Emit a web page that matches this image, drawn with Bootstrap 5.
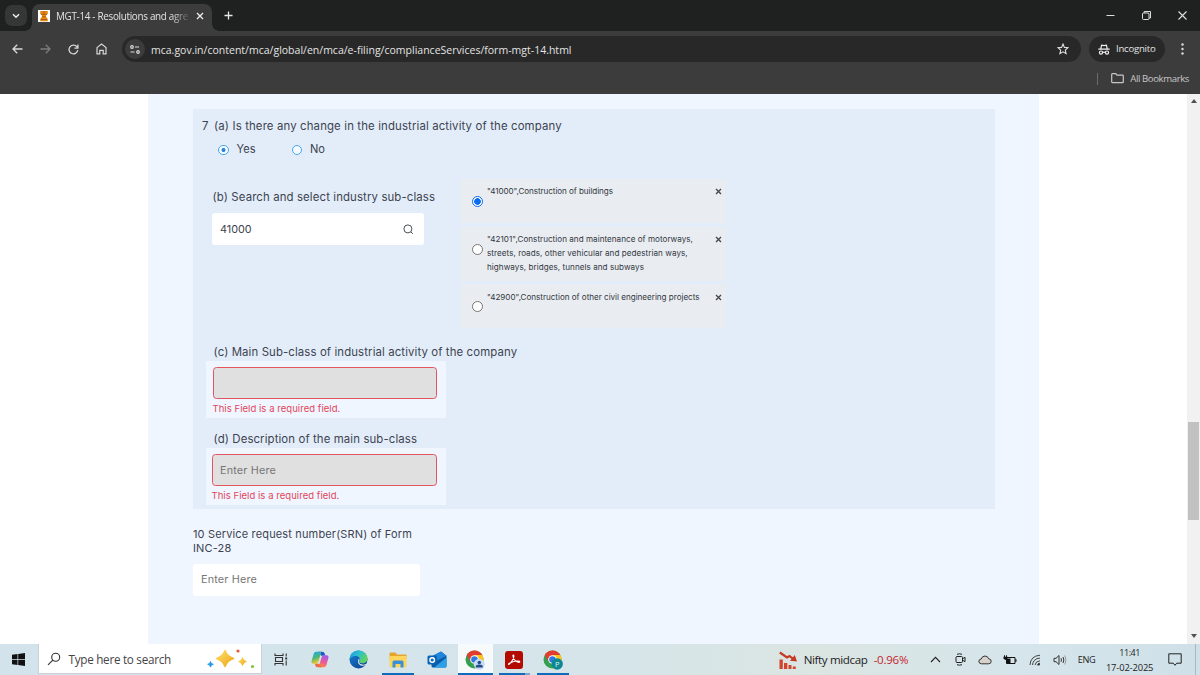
<!DOCTYPE html>
<html lang="en">
<head>
<meta charset="utf-8">
<title>MGT-14 - Resolutions and agreements</title>
<link href="https://cdn.jsdelivr.net/npm/bootstrap@5.3.0/dist/css/bootstrap.min.css" rel="stylesheet">
<style>
html,body{height:100%;overflow:hidden}
body{font-family:"Open Sans","Noto Sans",sans-serif;width:1200px;height:675px;font-size:10px;line-height:16px;color:#3d434f;background:#fff}
svg{display:block;flex:none}
.t{white-space:nowrap;display:inline-block}
/* browser chrome */
.browser{background:#3c3c3c;height:94px;color:#e3e3e3}
.tabstrip{height:31px;background:#1f2120}
.tabmenu{width:22px;height:21px;border-radius:7px;background:#353636;margin:5px 0 0 5px}
.tabitem{width:180px;height:27px;margin:4px 0 0 5px;border-radius:8px 8px 0 0;background:#3c3c3c;padding:0 0 3px 6px;position:relative}
.tabitem::before,.tabitem::after{content:"";position:absolute;bottom:0;width:7px;height:7px}
.tabitem::before{left:-7px;background:radial-gradient(circle at 0 0,transparent 6.5px,#3c3c3c 7px)}
.tabitem::after{right:-7px;background:radial-gradient(circle at 100% 0,transparent 6.5px,#3c3c3c 7px)}
.tabtitle{width:134px;margin:0 6px;-webkit-mask-image:linear-gradient(90deg,#000 86%,rgba(0,0,0,.2) 98%);mask-image:linear-gradient(90deg,#000 86%,rgba(0,0,0,.2) 98%)}
.t1{font-size:9.9px;letter-spacing:-.31px}
.plus{margin:11px 0 0 12px}
.win{height:31px;padding-right:13.5px;gap:27px}
.toolbar{height:36px}
.navs{margin-left:12px;gap:17px}
.omni{width:959px;height:26px;border-radius:13px;background:#282828;margin-left:15px}
.siteinfo{width:20px;height:20px;border-radius:50%;background:#3c3c3c;margin-left:3px}
.t2{font-size:10.5px;margin-left:6px;letter-spacing:.01px;padding-top:1px}
.star{margin-right:12px}
.incog{width:76px;height:26px;border-radius:13px;background:#282828;margin-left:8px;padding-left:9px}
.t3{font-size:9.6px;letter-spacing:-.24px;margin-left:6px}
.dots{margin-left:16px}
.bookmarks{height:23px;color:#c7c7c7;padding-right:11px}
.fold{margin:0 6px 0 13px}
.t4{font-size:9.6px;letter-spacing:-.4px}
/* form */
.page{height:550px;background:#fff}
.sheet{width:891px;margin-left:148px;background:#eff6ff;padding:15px 44px 0 45px;font-family:Inter,sans-serif}
.panel7{height:400px;background:#e3edfa;padding-top:9px}
.lbl{font-size:11.4px;height:16px;line-height:17px;letter-spacing:.12px}
.q7{width:12px;margin-left:9px}
.a1{letter-spacing:.135px}
.radios{height:16px;margin:8px 0 0 25px}
.rad{width:10.5px;height:10.5px;border-radius:50%;border:1px solid #4aa7ea;background:#f4faff;flex:none}
.rad.on{background:radial-gradient(circle,#2b86d9 0 1.7px,#f4faff 2.3px)}
.yes,.no{margin-left:8px;letter-spacing:0;font-size:11.1px;line-height:15px}
.yes{margin-right:36px}
.rowb{margin:21px 0 0 19px;height:165px}
.colb{width:249px;padding-top:10px}
.a2{margin-left:.5px}
.field{height:32px;border-radius:3px;background:#fff;font-size:10.8px;letter-spacing:.18px;padding:1px 8px 0}
.fb{width:212px;margin-top:8px;padding-right:10.5px;letter-spacing:0}
.field.bad{background:#e0e0e0;border:1px solid #e25560;padding:1px 7.5px 0;border-radius:3.5px}
.ph{color:#757575}
.choices{gap:3.7px;margin-left:-.5px}
.choice{width:265px;height:44px;background:#e9edf2;padding:6px 3.5px 0 11px;font-size:8.1px;line-height:13.8px;color:#33383f}
.c2{height:54px}
.c2,.c3{padding-top:6.4px}
.nrad{width:11px;height:11px;border:1px solid #767676;border-radius:50%;background:#fff;flex:none;margin:10.5px 4.5px 0 0}
.nrad.on{border-color:#0a6cf0;background:radial-gradient(circle,#0a6cf0 0 3px,#fff 3.6px)}
.x{margin-top:3px}
.b1{letter-spacing:-.07px}.b2{letter-spacing:.03px}.b3,.b4{letter-spacing:.05px}.b5{letter-spacing:-.02px}
.lc,.ld{margin-left:20.5px;letter-spacing:.11px}
.ld{margin-top:13px}
.errbox{width:240.5px;height:57px;margin:1px 0 0 12.5px;background:#eff6ff;padding:6px 9.5px 0 7px}
.ed{padding-left:6px}
.err{font-size:9.5px;letter-spacing:.05px;color:#e3455a;height:16px;line-height:16px;margin-top:1.5px}
.srn{font-size:11px;line-height:14.5px;margin-top:17.7px;letter-spacing:.15px}
.fs{width:227px;margin-top:8.3px}
.scroll{width:13px;background:#f1f1f1;padding:5px 0 6px}
.thumb{width:11px;height:98px;background:#c1c1c1;margin-top:319px}
/* taskbar */
.taskbar{height:31px;background:linear-gradient(90deg,#d3e3ec,#d5e5ea 50%,#dbe5e2 68%,#d5e5eb 85%,#cfe0e8);color:#1d1d1d}
.start{width:37.5px;padding-left:12px}
.tsearch{width:224px;height:30px;background:#fff;border:1px solid #c9d1d6;border-top:0;padding-left:8px;margin-bottom:1px}
.t5{font-size:11.7px;letter-spacing:-.27px;margin-left:8px;color:#444}
.spark{margin-left:35px}
.slot{width:38.9px;height:31px;display:flex;align-items:center;justify-content:center}
.run{background:linear-gradient(#0f6cbd,#0f6cbd) center bottom/32px 2px no-repeat}
.act{background:linear-gradient(#0f6cbd,#0f6cbd) center bottom/35px 2px no-repeat,linear-gradient(#f6fafb,#f6fafb) center/35px 100% no-repeat}
.multi{background:linear-gradient(#0f6cbd,#0f6cbd) 4px bottom/26px 2px no-repeat,linear-gradient(#7ea6c4,#7ea6c4) 30px bottom/5px 2px no-repeat}
.stock{margin-left:206px}
.t6{font-size:11.6px;letter-spacing:-.37px;width:64px;margin-left:7px}
.t7{font-size:11.5px;letter-spacing:-.23px;width:34.5px;margin-left:6px;color:#c4262e}
.tray{width:25px;display:flex;justify-content:center}
.caret{margin-left:14.5px}
.t8{font-size:9.2px;letter-spacing:-.27px;width:18px;margin-left:5px}
.clock{width:48px;margin-left:10px;line-height:14px;text-align:center}
.t9{font-size:9px;letter-spacing:-.4px}
.t10{font-size:9.4px;letter-spacing:-.15px}
.note{margin-left:14px}
</style>
</head>
<body class="d-flex flex-column">
<header class="browser">
 <div class="tabstrip d-flex align-items-start">
  <div class="tabmenu d-flex align-items-center justify-content-center"><svg width="8" height="6" viewBox="0 0 8 6" fill="none" stroke="#eee" stroke-width="1.5"><path d="M1 1.2 4 4.2 7 1.2"/></svg></div>
  <div class="tabitem d-flex align-items-center">
   <svg width="12" height="12" viewBox="0 0 12 12"><path fill="#fff" d="M0 0h12v12H0z"/><path fill="#e48a1b" d="M2.2 1h7.6v3L8 5.5v1L9.8 9v2.3H2.2V9L4 6.5v-1L2.2 4z"/><path stroke="#a65207" stroke-width=".8" d="M3 4.3h6M4 6.8h4M3 9.5h6M6 1v3"/></svg>
   <div class="tabtitle"><span class="t t1">MGT-14 - Resolutions and agre</span></div>
   <svg width="8" height="8" viewBox="0 0 8 8" stroke="#eee" stroke-width="1.3"><path d="M1 1 7 7M7 1 1 7"/></svg>
  </div>
  <svg width="9" height="9" viewBox="0 0 9 9" class="plus" stroke="#e8e8e8" stroke-width="1.3"><path d="M4.5 .5v8M.5 4.5h8"/></svg>
  <div class="win d-flex ms-auto align-items-center">
   <svg width="9" height="10" viewBox="0 0 9 10" stroke="#ddd"><path d="M.5 4.5h8"/></svg>
   <svg width="9" height="9" viewBox="0 0 9 9" fill="none" stroke="#ddd"><rect x=".5" y="2" width="6.5" height="6.5" rx="1"/><path d="M2.2 2V.5h6.3V7H7"/></svg>
   <svg width="9" height="9" viewBox="0 0 9 9" stroke="#ddd" stroke-width="1.1"><path d="M.5.5l8 8M8.5.5l-8 8"/></svg>
  </div>
 </div>
 <div class="toolbar d-flex align-items-center">
  <div class="navs d-flex align-items-center">
   <svg width="11" height="10" viewBox="0 0 11 10" fill="none" stroke="#d8d8d8" stroke-width="1.3"><path d="M10.5 5H1.2M5.2.8 1 5l4.2 4.2"/></svg>
   <svg width="11" height="10" viewBox="0 0 11 10" fill="none" stroke="#7c7c7c" stroke-width="1.3"><path d="M.5 5h9.3M5.8.8 10 5 5.8 9.2"/></svg>
   <svg width="11" height="11" viewBox="0 0 11 11" fill="none" stroke="#d8d8d8" stroke-width="1.3"><path d="M9.8 6.2A4.4 4.4 0 1 1 8.9 2.7L9.8 3.8M9.9.6v3.5H6.4"/></svg>
   <svg width="11" height="12" viewBox="0 0 11 12" fill="none" stroke="#d8d8d8" stroke-width="1.2"><path d="M1 4.6 5.5 1 10 4.6v6.3H7.2V7.4H3.8v3.5H1z"/></svg>
  </div>
  <div class="omni d-flex align-items-center">
   <div class="siteinfo d-flex align-items-center justify-content-center"><svg width="10" height="9" viewBox="0 0 10 9" fill="none" stroke="#ddd" stroke-width="1.2"><circle cx="2" cy="2" r="1.3"/><path d="M5 2h4M.5 7h4"/><circle cx="8" cy="7" r="1.3"/></svg></div>
   <span class="t t2">mca.gov.in/content/mca/global/en/mca/e-filing/complianceServices/form-mgt-14.html</span>
   <svg class="ms-auto star" width="12" height="12" viewBox="0 0 12 12" fill="none" stroke="#ddd" stroke-width="1.1"><path d="M6 1 7.4 4.4 11 4.7 8.3 7.1 9.1 10.7 6 8.8 2.9 10.7 3.7 7.1 1 4.7 4.6 4.4z"/></svg>
  </div>
  <div class="incog d-flex align-items-center">
   <svg width="12" height="11" viewBox="0 0 12 11" fill="none" stroke="#eee" stroke-width="1.2"><path d="M.3 5.2h11.4M2.7 5 3.6 1.2 6 1.6l2.4-.4L9.3 5M4.6 8.5q1.4-.8 2.8 0"/><circle cx="3" cy="8.6" r="1.6"/><circle cx="9" cy="8.6" r="1.6"/></svg>
   <span class="t t3">Incognito</span>
  </div>
  <svg class="dots" width="3" height="12" viewBox="0 0 3 12" fill="#ddd"><circle cx="1.5" cy="1.5" r="1.2"/><circle cx="1.5" cy="6" r="1.2"/><circle cx="1.5" cy="10.5" r="1.2"/></svg>
 </div>
 <div class="bookmarks d-flex align-items-center justify-content-end">
  <svg width="1" height="12"><path fill="#6b6b6b" d="M0 0h1v12H0z"/></svg>
  <svg class="fold" width="13" height="11" viewBox="0 0 13 11" fill="none" stroke="#c7c7c7" stroke-width="1.2"><path d="M.7 1.4q0-.7.7-.7h3.3l1.3 1.5h5.6q.7 0 .7.7v6q0 .7-.7.7H1.4q-.7 0-.7-.7z"/></svg>
  <span class="t t4">All Bookmarks</span>
 </div>
</header>

<main class="page d-flex">
 <section class="sheet">
  <div class="panel7">
   <div class="lbl d-flex"><span class="t q7">7</span><span class="t a1">(a) Is there any change in the industrial activity of the company</span></div>
   <div class="radios d-flex align-items-center"><i class="rad on"></i><span class="lbl t yes">Yes</span><i class="rad"></i><span class="lbl t no">No</span></div>
   <div class="rowb d-flex">
    <div class="colb">
     <div class="lbl"><span class="t a2">(b) Search and select industry sub-class</span></div>
     <div class="field fb d-flex align-items-center justify-content-between"><span class="t">41000</span><svg width="11" height="11" viewBox="0 0 11 11" fill="none" stroke="#4a5058"><circle cx="4.9" cy="4.9" r="4"/><path d="m7.8 7.8 2 2"/></svg></div>
    </div>
    <div class="d-flex flex-column choices">
     <div class="choice c1 d-flex"><i class="nrad on"></i><div class="flex-fill"><span class="t b1">"41000",Construction of buildings</span></div><svg class="x" width="7" height="7" viewBox="0 0 7 7" stroke="#444" stroke-width="1.3"><path d="m1 1 5 5M6 1 1 6"/></svg></div>
     <div class="choice c2 d-flex"><i class="nrad"></i><div class="flex-fill"><span class="t b2">"42101",Construction and maintenance of motorways,</span><br><span class="t b3">streets, roads, other vehicular and pedestrian ways,</span><br><span class="t b4">highways, bridges, tunnels and subways</span></div><svg class="x" width="7" height="7" viewBox="0 0 7 7" stroke="#444" stroke-width="1.3"><path d="m1 1 5 5M6 1 1 6"/></svg></div>
     <div class="choice c3 d-flex"><i class="nrad"></i><div class="flex-fill"><span class="t b5">"42900",Construction of other civil engineering projects</span></div><svg class="x" width="7" height="7" viewBox="0 0 7 7" stroke="#444" stroke-width="1.3"><path d="m1 1 5 5M6 1 1 6"/></svg></div>
    </div>
   </div>
   <div class="lbl lc"><span class="t">(c) Main Sub-class of industrial activity of the company</span></div>
   <div class="errbox ec"><div class="field bad"></div><div class="err"><span class="t">This Field is a required field.</span></div></div>
   <div class="lbl ld"><span class="t">(d) Description of the main sub-class</span></div>
   <div class="errbox ed"><div class="field bad d-flex align-items-center ph"><span class="t">Enter Here</span></div><div class="err"><span class="t">This Field is a required field.</span></div></div>
  </div>
  <div class="srn"><span class="t">10 Service request number(SRN) of Form</span><br><span class="t">INC-28</span></div>
  <div class="field fs d-flex align-items-center ph"><span class="t">Enter Here</span></div>
 </section>
 <div class="scroll ms-auto d-flex flex-column align-items-center">
  <svg width="6" height="4" viewBox="0 0 6 4" fill="#505050"><path d="M0 4 3 0l3 4z"/></svg>
  <div class="thumb"></div>
  <svg class="mt-auto" width="6" height="4" viewBox="0 0 6 4" fill="#505050"><path d="m0 0 3 4 3-4z"/></svg>
 </div>
</main>

<footer class="taskbar d-flex align-items-center">
 <div class="start"><svg width="13" height="13" viewBox="0 0 13 13" fill="#111"><path d="M0 1.8 5.5 1v5.2H0zM6.2.9 13 0v6.2H6.2zM0 6.9h5.5v5.2L0 11.3zM6.2 6.9H13V13l-6.8-.9z"/></svg></div>
 <div class="tsearch d-flex align-items-center">
  <svg width="14" height="14" viewBox="0 0 14 14" fill="none" stroke="#333" stroke-width="1.1"><circle cx="8.7" cy="5.2" r="4"/><path d="M5.8 8.1 1 12.9"/></svg>
  <span class="t t5">Type here to search</span>
  <svg class="spark" width="50" height="24" viewBox="0 0 50 24">
   <defs><linearGradient id="gold" x1="0" y1="0" x2="1" y2="1"><stop offset="0" stop-color="#ffe067"/><stop offset="1" stop-color="#eda51c"/></linearGradient></defs>
   <path fill="url(#gold)" stroke="url(#gold)" stroke-width="1.5" stroke-linejoin="round" d="M19 3.500q2.200 6 8.500 8-6.300 2-8.500 8-2.200-6-8.500-8 6.300-2 8.500-8z"/>
   <path fill="url(#gold)" d="M36.500 10q1.200 3.300 4.500 4.500-3.300 1.200-4.500 4.500-1.200-3.300-4.500-4.500 3.300-1.200 4.500-4.500z"/>
   <path fill="#229bea" stroke="#229bea" stroke-linejoin="round" d="m4.500 14.500.8 2 2 .8-2 .8-.8 2-.8-2-2-.8 2-.8z"/>
   <circle cx="32" cy="4" r="1.6" fill="#e9573a"/><circle cx="46.5" cy="19.5" r="1.6" fill="#82c23d"/>
  </svg>
 </div>
 <div class="slot"><svg width="14" height="13" viewBox="0 0 14 13" fill="none" stroke="#333" stroke-width="1.1"><path d="M1 .5v2h8v-2M1 12.500v-2h8v2M1.500 4.500h7v4h-7zM12.200.5v3M12.200 7.500v5"/><path stroke-width="2" d="M11.200 5.500h2"/></svg></div>
 <div class="slot"><svg width="18" height="17" viewBox="0 0 18 17">
  <defs><linearGradient id="cpa" x1="0" y1="0" x2=".3" y2="1"><stop offset="0" stop-color="#22a7ee"/><stop offset=".55" stop-color="#49b67c"/><stop offset="1" stop-color="#f0c92c"/></linearGradient><linearGradient id="cpb" x1=".5" y1="0" x2=".3" y2="1"><stop offset="0" stop-color="#a25de6"/><stop offset=".55" stop-color="#ea5a9b"/><stop offset="1" stop-color="#f98b3d"/></linearGradient></defs>
  <path fill="#2059c9" d="M7 .8h4.500q1.500 0 2 1.500l.8 2.500h-4z"/>
  <path fill="url(#cpa)" d="M5 .8h4.500q1 0 .6 1.300L7.300 11q-.5 1.700-2 1.700H2.500Q0 12.700.6 10L2.700 2.700Q3.300.8 5 .8z"/>
  <path fill="url(#cpb)" d="M13 16.200H8.500q-1 0-.6-1.300L10.700 6q.5-1.700 2-1.700h2.800q2.500 0 1.900 2.700l-2.100 7.300q-.6 1.900-2.300 1.900z"/>
  <path fill="#ef6a45" d="M11 16.200H6.500q-1.500 0-2-1.500l-.6-2h4z"/></svg></div>
 <div class="slot"><svg width="19" height="19" viewBox="0 0 19 19">
  <defs><linearGradient id="eda" x1="0" y1="0" x2="1" y2=".5"><stop offset="0" stop-color="#1c9be0"/><stop offset=".5" stop-color="#2bbfd0"/><stop offset="1" stop-color="#62d35b"/></linearGradient><linearGradient id="edb" x1="0" y1="0" x2=".6" y2="1"><stop offset="0" stop-color="#1683d8"/><stop offset="1" stop-color="#114a98"/></linearGradient></defs>
  <circle cx="9.5" cy="9.5" r="9" fill="url(#edb)"/>
  <path fill="url(#eda)" d="M.6 9.200C1 3.800 5 .5 9.500.5c5.500 0 9 4 9 8 0 3-2.300 4.800-5 4.800-2.500 0-3.600-1-3-2 .9-1.500.5-4.800-3-5.300C4.200 5.600 1.500 7 .6 9.200z"/>
  <path fill="#d7e6eb" d="M10.500 10.200c-.8 1.500-.3 3.800 2.800 4.400 1.800.3 3.500-.3 4.600-1.100l-.8 1.400c-1.500.8-3.900 1.200-5.900.3C8.800 14 8.600 11 9.800 8.800q.8.500.7 1.400z"/></svg></div>
 <div class="slot run"><svg width="18" height="16" viewBox="0 0 18 16"><path fill="#e5a52c" d="M.5 1.500Q.5.500 1.500.5h5l1.500 2H17q.5 0 .5.700V7H.5z"/><path fill="#ffd65c" d="M.5 4h17v10.500q0 .8-.8.800H1.300q-.8 0-.8-.8z"/><path fill="#3b8fd6" d="M3.500 15.500V10q0-1.500 1.500-1.500h8q1.500 0 1.500 1.500v5.500h-3V12h-5v3.500z"/></svg></div>
 <div class="slot"><svg width="20" height="17" viewBox="0 0 20 17"><path fill="#0c59a4" d="M4.500 5.500 14 .5l5.500 4.300V15q0 1.500-1.500 1.500H6q-1.500 0-1.500-1.500z"/><path fill="#1f86dc" d="m7 4.200 7-3.700 5.500 4.300L10 9.500z"/><path fill="#2b9fe8" d="M19.500 6.500V15q0 1.500-1.500 1.500H7z"/><rect x=".5" y="4.500" width="9.500" height="9" rx="1.500" fill="#0b63b8"/><circle cx="5.200" cy="9" r="2.300" fill="none" stroke="#fff" stroke-width="1.400"/></svg></div>
 <div class="slot act"><svg width="20" height="20" viewBox="0 0 20 20"><circle cx="9.5" cy="9.5" r="9" fill="#34a04e"/><path fill="#e33b2e" d="M1.700 5A9 9 0 0 1 17.300 5L14 8 9.500 9.500 5.600 11.700z"/><path fill="#fbc41a" d="M17.300 5a9 9 0 0 1-7.800 13.500L13.400 11.700 9.500 5z"/><circle cx="9.5" cy="9.5" r="4.300" fill="#fff"/><circle cx="9.5" cy="9.5" r="3.300" fill="#2e78e4"/><circle cx="14.300" cy="14.300" r="5.500" fill="#c9dcf3"/><circle cx="14.300" cy="12.500" r="1.800" fill="#214f8e"/><path fill="#214f8e" d="M10.800 17.500v-1q0-2 3.500-2t3.500 2v1z"/></svg></div>
 <div class="slot multi"><svg width="18" height="18" viewBox="0 0 18 18"><rect width="18" height="18" rx="3" fill="#b30b00"/><path fill="none" stroke="#fff" stroke-width="1.1" d="M3.700 13.500c1.500-1 5.400-5.600 5.200-8.600-.1-1.300-1.100-1.200-1-.1.300 3.500 3.400 6.700 6 6.600 1.300-.1 1-1.200-.3-1.300-2.500-.2-6.300.6-8.500 1.800-1.500.8-2 1.400-1.400 1.600z"/></svg></div>
 <div class="slot run"><svg width="20" height="20" viewBox="0 0 20 20"><circle cx="9.5" cy="9.5" r="9" fill="#34a04e"/><path fill="#e33b2e" d="M1.700 5A9 9 0 0 1 17.300 5L14 8 9.500 9.500 5.600 11.700z"/><path fill="#fbc41a" d="M17.300 5a9 9 0 0 1-7.800 13.500L13.400 11.700 9.500 5z"/><circle cx="9.5" cy="9.5" r="4.300" fill="#fff"/><circle cx="9.5" cy="9.5" r="3.300" fill="#2e78e4"/><circle cx="14.200" cy="14" r="5.700" fill="#0d8894"/><text x="14.2" y="16.6" font-size="7.5" text-anchor="middle" fill="#d9f3f5">P</text></svg></div>
 <svg class="stock" width="18" height="18" viewBox="0 0 18 18"><g fill="#d2452a"><path d="M.5 8.500h3.300V18H.5zM5 12h3.300v6H5zM9.500 14h3v4h-3zM13.800 15.500h2.900V18h-2.900z"/></g><path fill="none" stroke="#c43a22" stroke-width="2.200" d="M.8 1.500 8 6.500l2.500-1.500 5 4"/><path fill="#c43a22" d="m18 10.500-7-.7 4.800-5.800z"/></svg>
 <span class="t t6">Nifty midcap</span>
 <span class="t t7">-0.96%</span>
 <div class="tray caret"><svg width="11" height="7" viewBox="0 0 11 7" fill="none" stroke="#222" stroke-width="1.1"><path d="M1 6 5.500 1.300 10 6"/></svg></div>
 <div class="tray"><svg width="11" height="13" viewBox="0 0 11 13" fill="none" stroke="#222"><rect x="1" y="3.500" width="6.500" height="6" rx="1"/><path d="m7.500 5.800 2.500-1.500v4.400L7.500 7.200M2 1.300q2.500-1 5 0M2 11.700q2.500 1 5 0"/></svg></div>
 <div class="tray"><svg width="14" height="10" viewBox="0 0 14 10" fill="#d6d2cb" stroke="#333"><path d="M3.500 8.800Q.8 8.600.8 6.300.9 4.200 3.200 4 4.100 1 7 1q2.800 0 3.700 2.800 2.500.1 2.500 2.500 0 2.500-2.700 2.500z"/></svg></div>
 <div class="tray"><svg width="14" height="10" viewBox="0 0 14 10" fill="none" stroke="#111"><path d="M3.500 2.500h8.500v6H3.500z"/><path fill="#111" stroke="none" d="M4 3.500h3.500v5H4zM12.300 4.200h1.200v2.600h-1.200zM.5 1.800h4v2Q3 6 .5 3.800z"/><path d="M1.500.3v2M3.500.3v2"/></svg></div>
 <div class="tray"><svg width="12" height="12" viewBox="0 0 12 12" fill="none" stroke="#444"><path d="M1 11Q1.500 2 11 1.200M3.500 11Q4 4.700 11 4M6 11q.5-3.800 5-4.200"/><path fill="#222" d="M8.500 11q.2-1.500 2-1.800V11z"/></svg></div>
 <div class="tray"><svg width="14" height="12" viewBox="0 0 14 12" fill="none" stroke="#333"><path d="M1 4.300h2L6 1.500v9L3 7.700H1zM8 4.300q1 1.700 0 3.400M10 3q1.700 3 0 6"/><path stroke="#999" d="M11.800 1.500q2.300 4.500 0 9"/></svg></div>
 <span class="t t8">ENG</span>
 <div class="clock"><span class="t t9">11:41</span><br><span class="t t10">17-02-2025</span></div>
 <svg class="note" width="14" height="13" viewBox="0 0 14 13" fill="none" stroke="#222"><path d="M.8.8h12.400v9.400H8.700L7 12.300 5.300 10.200H.8z"/></svg>
 <svg class="ms-auto me-1" width="1" height="31"><path fill="#a9b8bf" d="M0 0h1v31H0z"/></svg>
</footer>
<script src="https://cdn.jsdelivr.net/npm/bootstrap@5.3.0/dist/js/bootstrap.bundle.min.js"></script>
</body>
</html>
